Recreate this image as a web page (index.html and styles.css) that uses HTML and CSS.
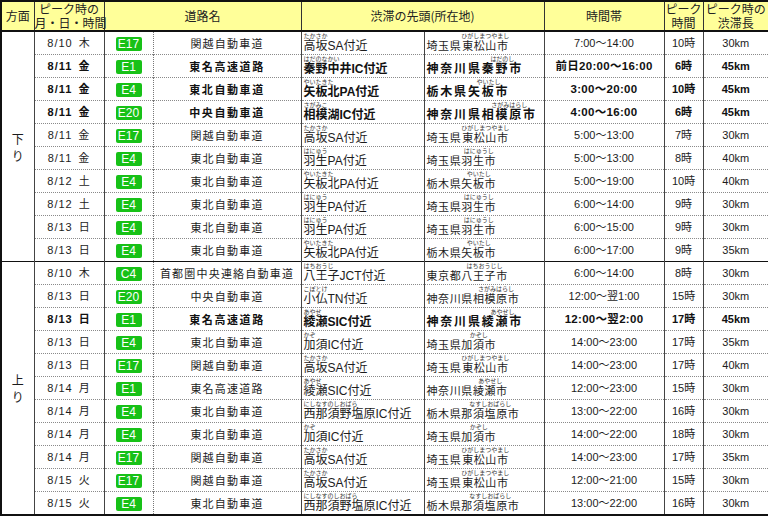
FILE: index.html
```html
<!DOCTYPE html>
<html lang="ja">
<head>
<meta charset="utf-8">
<link rel="stylesheet" href="styles.css">
</head>
<body>
<table class="jam">
<colgroup>
<col class="c1"><col class="c2"><col class="c3"><col class="c4"><col class="c5"><col class="c6"><col class="c7"><col class="c8"><col class="c9">
</colgroup>
<thead>
<tr>
<th>方面</th>
<th>ピーク時の<br>月・日・時間</th>
<th colspan="2">道路名</th>
<th colspan="2">渋滞の先頭(所在地)</th>
<th>時間帯</th>
<th>ピーク<br>時間</th>
<th>ピーク時の<br>渋滞長</th>
</tr>
</thead>
<tbody>
<tr>
<td class="dir" rowspan="10">下<br>り</td>
<td class="dt">8/10 木</td><td class="b"><span class="badge">E17</span></td><td class="rd">関越自動車道</td>
<td class="loc"><ruby>高坂<rt>たかさか</rt></ruby>SA付近</td><td class="city">埼玉県<ruby>東松山市<rt>ひがしまつやまし</rt></ruby></td>
<td class="tm">7:00～14:00</td><td class="pk">10時</td><td class="ln">30km</td>
</tr>
<tr class="bd">
<td class="dt">8/11 金</td><td class="b"><span class="badge">E1</span></td><td class="rd">東名高速道路</td>
<td class="loc"><ruby>秦野中井<rt>はだのなかい</rt></ruby>IC付近</td><td class="city">神奈川県<ruby>秦野市<rt>はだのし</rt></ruby></td>
<td class="tm">前日20:00～16:00</td><td class="pk">6時</td><td class="ln">45km</td>
</tr>
<tr class="bd">
<td class="dt">8/11 金</td><td class="b"><span class="badge">E4</span></td><td class="rd">東北自動車道</td>
<td class="loc"><ruby>矢板北<rt>やいたきた</rt></ruby>PA付近</td><td class="city">栃木県<ruby>矢板市<rt>やいたし</rt></ruby></td>
<td class="tm">3:00～20:00</td><td class="pk">10時</td><td class="ln">45km</td>
</tr>
<tr class="bd">
<td class="dt">8/11 金</td><td class="b"><span class="badge">E20</span></td><td class="rd">中央自動車道</td>
<td class="loc"><ruby>相模湖<rt>さがみこ</rt></ruby>IC付近</td><td class="city">神奈川県<ruby>相模原市<rt>さがみはらし</rt></ruby></td>
<td class="tm">4:00～16:00</td><td class="pk">6時</td><td class="ln">45km</td>
</tr>
<tr>
<td class="dt">8/11 金</td><td class="b"><span class="badge">E17</span></td><td class="rd">関越自動車道</td>
<td class="loc"><ruby>高坂<rt>たかさか</rt></ruby>SA付近</td><td class="city">埼玉県<ruby>東松山市<rt>ひがしまつやまし</rt></ruby></td>
<td class="tm">5:00～13:00</td><td class="pk">7時</td><td class="ln">30km</td>
</tr>
<tr>
<td class="dt">8/11 金</td><td class="b"><span class="badge">E4</span></td><td class="rd">東北自動車道</td>
<td class="loc"><ruby>羽生<rt>はにゅう</rt></ruby>PA付近</td><td class="city">埼玉県<ruby>羽生市<rt>はにゅうし</rt></ruby></td>
<td class="tm">5:00～13:00</td><td class="pk">8時</td><td class="ln">40km</td>
</tr>
<tr>
<td class="dt">8/12 土</td><td class="b"><span class="badge">E4</span></td><td class="rd">東北自動車道</td>
<td class="loc"><ruby>矢板北<rt>やいたきた</rt></ruby>PA付近</td><td class="city">栃木県<ruby>矢板市<rt>やいたし</rt></ruby></td>
<td class="tm">5:00～19:00</td><td class="pk">10時</td><td class="ln">40km</td>
</tr>
<tr>
<td class="dt">8/12 土</td><td class="b"><span class="badge">E4</span></td><td class="rd">東北自動車道</td>
<td class="loc"><ruby>羽生<rt>はにゅう</rt></ruby>PA付近</td><td class="city">埼玉県<ruby>羽生市<rt>はにゅうし</rt></ruby></td>
<td class="tm">6:00～14:00</td><td class="pk">9時</td><td class="ln">30km</td>
</tr>
<tr>
<td class="dt">8/13 日</td><td class="b"><span class="badge">E4</span></td><td class="rd">東北自動車道</td>
<td class="loc"><ruby>羽生<rt>はにゅう</rt></ruby>PA付近</td><td class="city">埼玉県<ruby>羽生市<rt>はにゅうし</rt></ruby></td>
<td class="tm">6:00～15:00</td><td class="pk">9時</td><td class="ln">30km</td>
</tr>
<tr>
<td class="dt">8/13 日</td><td class="b"><span class="badge">E4</span></td><td class="rd">東北自動車道</td>
<td class="loc"><ruby>矢板北<rt>やいたきた</rt></ruby>PA付近</td><td class="city">栃木県<ruby>矢板市<rt>やいたし</rt></ruby></td>
<td class="tm">6:00～17:00</td><td class="pk">9時</td><td class="ln">35km</td>
</tr>
<tr class="sec">
<td class="dir" rowspan="11">上<br>り</td>
<td class="dt">8/10 木</td><td class="b"><span class="badge">C4</span></td><td class="rd">首都圏中央連絡自動車道</td>
<td class="loc"><ruby>八王子<rt>はちおうじ</rt></ruby>JCT付近</td><td class="city">東京都<ruby>八王子市<rt>はちおうじし</rt></ruby></td>
<td class="tm">6:00～14:00</td><td class="pk">8時</td><td class="ln">30km</td>
</tr>
<tr>
<td class="dt">8/13 日</td><td class="b"><span class="badge">E20</span></td><td class="rd">中央自動車道</td>
<td class="loc"><ruby>小仏<rt>こぼとけ</rt></ruby>TN付近</td><td class="city">神奈川県<ruby>相模原市<rt>さがみはらし</rt></ruby></td>
<td class="tm">12:00～翌1:00</td><td class="pk">15時</td><td class="ln">30km</td>
</tr>
<tr class="bd">
<td class="dt">8/13 日</td><td class="b"><span class="badge">E1</span></td><td class="rd">東名高速道路</td>
<td class="loc"><ruby>綾瀬<rt>あやせ</rt></ruby>SIC付近</td><td class="city">神奈川県<ruby>綾瀬市<rt>あやせし</rt></ruby></td>
<td class="tm">12:00～翌2:00</td><td class="pk">17時</td><td class="ln">45km</td>
</tr>
<tr>
<td class="dt">8/13 日</td><td class="b"><span class="badge">E4</span></td><td class="rd">東北自動車道</td>
<td class="loc"><ruby>加須<rt>かぞ</rt></ruby>IC付近</td><td class="city">埼玉県<ruby>加須市<rt>かぞし</rt></ruby></td>
<td class="tm">14:00～23:00</td><td class="pk">17時</td><td class="ln">35km</td>
</tr>
<tr>
<td class="dt">8/13 日</td><td class="b"><span class="badge">E17</span></td><td class="rd">関越自動車道</td>
<td class="loc"><ruby>高坂<rt>たかさか</rt></ruby>SA付近</td><td class="city">埼玉県<ruby>東松山市<rt>ひがしまつやまし</rt></ruby></td>
<td class="tm">14:00～23:00</td><td class="pk">17時</td><td class="ln">40km</td>
</tr>
<tr>
<td class="dt">8/14 月</td><td class="b"><span class="badge">E1</span></td><td class="rd">東名高速道路</td>
<td class="loc"><ruby>綾瀬<rt>あやせ</rt></ruby>SIC付近</td><td class="city">神奈川県<ruby>綾瀬市<rt>あやせし</rt></ruby></td>
<td class="tm">12:00～23:00</td><td class="pk">15時</td><td class="ln">30km</td>
</tr>
<tr>
<td class="dt">8/14 月</td><td class="b"><span class="badge">E4</span></td><td class="rd">東北自動車道</td>
<td class="loc"><ruby>西那須野塩原<rt>にしなすのしおばら</rt></ruby>IC付近</td><td class="city">栃木県<ruby>那須塩原市<rt>なすしおばらし</rt></ruby></td>
<td class="tm">13:00～22:00</td><td class="pk">16時</td><td class="ln">30km</td>
</tr>
<tr>
<td class="dt">8/14 月</td><td class="b"><span class="badge">E4</span></td><td class="rd">東北自動車道</td>
<td class="loc"><ruby>加須<rt>かぞ</rt></ruby>IC付近</td><td class="city">埼玉県<ruby>加須市<rt>かぞし</rt></ruby></td>
<td class="tm">14:00～22:00</td><td class="pk">18時</td><td class="ln">30km</td>
</tr>
<tr>
<td class="dt">8/14 月</td><td class="b"><span class="badge">E17</span></td><td class="rd">関越自動車道</td>
<td class="loc"><ruby>高坂<rt>たかさか</rt></ruby>SA付近</td><td class="city">埼玉県<ruby>東松山市<rt>ひがしまつやまし</rt></ruby></td>
<td class="tm">14:00～23:00</td><td class="pk">17時</td><td class="ln">35km</td>
</tr>
<tr>
<td class="dt">8/15 火</td><td class="b"><span class="badge">E17</span></td><td class="rd">関越自動車道</td>
<td class="loc"><ruby>高坂<rt>たかさか</rt></ruby>SA付近</td><td class="city">埼玉県<ruby>東松山市<rt>ひがしまつやまし</rt></ruby></td>
<td class="tm">12:00～21:00</td><td class="pk">15時</td><td class="ln">30km</td>
</tr>
<tr>
<td class="dt">8/15 火</td><td class="b"><span class="badge">E4</span></td><td class="rd">東北自動車道</td>
<td class="loc"><ruby>西那須野塩原<rt>にしなすのしおばら</rt></ruby>IC付近</td><td class="city">栃木県<ruby>那須塩原市<rt>なすしおばらし</rt></ruby></td>
<td class="tm">13:00～22:00</td><td class="pk">16時</td><td class="ln">30km</td>
</tr>
</tbody>
</table>
</body>
</html>
```

FILE: styles.css
```css
html, body {
  margin: 0;
  padding: 0;
  background: #ffffff;
}

body {
  font-family: "Liberation Sans", "Noto Sans CJK JP", sans-serif;
  color: #1c1c1c;
}

.jam {
  width: 768px;
  border-collapse: collapse;
  table-layout: fixed;
  border: 2px solid #111;
}

.c1 { width: 33px; }
.c2 { width: 70px; }
.c3 { width: 49px; }
.c4 { width: 148px; }
.c5 { width: 123px; }
.c6 { width: 120px; }
.c7 { width: 120px; }
.c8 { width: 39px; }
.c9 { width: 66px; }

.jam th {
  background: #ffff99;
  font-weight: normal;
  font-size: 12px;
  line-height: 14px;
  height: 26px;
  padding: 0;
  border: 1px solid #333;
  border-bottom: 2px solid #111;
  color: #222;
  white-space: nowrap;
  font-family: "Noto Sans CJK JP", sans-serif;
}

.jam td {
  height: 21px;
  padding: 0;
  border-left: 1px solid #444;
  border-right: 1px solid #444;
  border-top: 1px dotted #8a8a8a;
  font-size: 11px;
  line-height: 14px;
  text-align: center;
  white-space: nowrap;
  overflow: hidden;
  vertical-align: middle;
}

.jam tr.sec td {
  border-top: 1px solid #111;
}

.jam td.dir {
  font-family: "Noto Sans CJK JP", sans-serif;
  font-size: 12px;
  line-height: 17px;
  border-top: 1px solid #111;
}

.jam td.dt {
  letter-spacing: 1px;
  word-spacing: 2px;
}

.jam td.b {
  border-right: 1px dotted #777;
}

.badge {
  display: inline-block;
  width: 26px;
  height: 14px;
  line-height: 14px;
  background: #17c117;
  color: #ffffff;
  border-radius: 2px;
  font-size: 12px;
  font-weight: normal;
  letter-spacing: 0;
  vertical-align: middle;
}

.jam td.rd {
  border-left: 1px dotted #777;
  letter-spacing: 1.2px;
  font-family: "Noto Sans CJK JP", sans-serif;
}

.jam td.loc {
  text-align: left;
  padding-left: 2px;
  font-size: 12px;
  line-height: 13px;
  vertical-align: bottom;
  padding-bottom: 1px;
}

.jam td.city {
  text-align: left;
  padding-left: 2px;
  font-size: 11px;
  line-height: 13px;
  letter-spacing: 0.6px;
  vertical-align: bottom;
  padding-bottom: 1px;
}

.jam ruby {
  display: inline-flex;
  flex-direction: column-reverse;
  align-items: center;
  vertical-align: bottom;
  line-height: 13px;
}

.jam td.loc ruby {
  align-items: flex-start;
}

.jam rt {
  display: block;
  font-size: 6px;
  line-height: 7px;
  height: 7px;
  letter-spacing: 0;
  font-weight: normal;
  color: #333;
  text-align: left;
}

.jam td.tm {
  font-size: 11px;
}

.jam td.pk,
.jam td.ln {
  font-size: 11px;
}

.jam tr.bd td {
  font-weight: bold;
  color: #111;
}

.jam tr.bd td.rd {
  letter-spacing: 1.6px;
}

.jam tr.bd td.city {
  letter-spacing: 1.8px;
  font-size: 12px;
}

.jam tr.bd td.tm {
  font-size: 11.5px;
  letter-spacing: 0.3px;
}
```
